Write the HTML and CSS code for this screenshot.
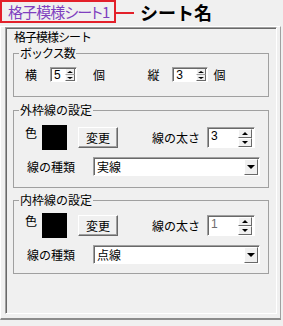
FILE: index.html
```html
<!DOCTYPE html>
<html lang="ja">
  <head>
    <meta charset="UTF-8" />
    <meta name="viewport" content="width=device-width, initial-scale=1.0" />
    <title>格子模様シート</title>
    <link rel="stylesheet" href="styles.css">
  </head>
  <body>
    <div id="header">
      <div id="sheet-tab">格子模様シート1</div>
      <div id="pointer"></div>
      <div id="sheet-label">シート名</div>
    </div>
    <div id="frame">
      <div id="panel">
        <div class="panel-title">格子模様シート</div>

        <fieldset class="group group-count">
          <legend>ボックス数</legend>
          <div class="count-row">
            <span class="count-label">横</span>
            <div class="spin spin-small spin-x">
              <span class="spin-value">5</span>
              <div class="spin-btns">
                <span class="spin-up"><i class="arrow-up"></i></span>
                <span class="spin-down"><i class="arrow-down"></i></span>
              </div>
            </div>
            <span class="unit">個</span>
            <span class="count-label">縦</span>
            <div class="spin spin-small spin-y">
              <span class="spin-value">3</span>
              <div class="spin-btns">
                <span class="spin-up"><i class="arrow-up"></i></span>
                <span class="spin-down"><i class="arrow-down"></i></span>
              </div>
            </div>
            <span class="unit unit-last">個</span>
          </div>
        </fieldset>

        <fieldset class="group group-line">
          <legend>外枠線の設定</legend>
          <div class="color-row">
            <span class="color-label">色</span>
            <div class="swatch"></div>
            <button class="change-btn">変更</button>
            <span class="width-label">線の太さ</span>
            <div class="spin spin-large">
              <span class="spin-value">3</span>
              <div class="spin-btns">
                <span class="spin-up"><i class="arrow-up"></i></span>
                <span class="spin-down"><i class="arrow-down"></i></span>
              </div>
            </div>
          </div>
          <div class="type-row">
            <span class="type-label">線の種類</span>
            <div class="select">
              <span class="select-value">実線</span>
              <span class="select-btn"><i class="arrow-down"></i></span>
            </div>
          </div>
        </fieldset>

        <fieldset class="group group-line group-inner">
          <legend>内枠線の設定</legend>
          <div class="color-row">
            <span class="color-label">色</span>
            <div class="swatch"></div>
            <button class="change-btn">変更</button>
            <span class="width-label">線の太さ</span>
            <div class="spin spin-large">
              <span class="spin-value spin-muted">1</span>
              <div class="spin-btns">
                <span class="spin-up"><i class="arrow-up"></i></span>
                <span class="spin-down"><i class="arrow-down"></i></span>
              </div>
            </div>
          </div>
          <div class="type-row">
            <span class="type-label">線の種類</span>
            <div class="select">
              <span class="select-value">点線</span>
              <span class="select-btn"><i class="arrow-down"></i></span>
            </div>
          </div>
        </fieldset>
      </div>
    </div>
  </body>
</html>
```

FILE: styles.css
```css
body {
  margin: 0;
  width: 283px;
  height: 326px;
  overflow: hidden;
  background-color: #f0f0f0;
  font-family: "Noto Sans CJK JP", sans-serif;
  font-size: 12px;
  line-height: 14px;
  color: #000;
}

/* top: sheet name callout */
#header {
  display: flex;
  align-items: flex-start;
  height: 26px;
}

#sheet-tab {
  box-sizing: border-box;
  width: 116px;
  height: 23px;
  border: 2px solid #e3202a;
  padding-left: 6px;
  font-size: 15px;
  line-height: 19px;
  letter-spacing: -0.9px;
  color: #7f3fbf;
  white-space: nowrap;
  font-feature-settings: "palt";
}

#pointer {
  width: 18px;
  height: 2px;
  margin-top: 12px;
  background-color: #e3202a;
}

#sheet-label {
  margin-left: 6px;
  margin-top: -1px;
  font-size: 18px;
  line-height: 26px;
  font-weight: bold;
}

/* outer frame and sunken panel */
#frame {
  box-sizing: border-box;
  width: 281px;
  height: 294px;
  border-top: 1px solid #fff;
  border-left: 1px solid #fff;
  border-right: 1px solid #a0a0a0;
  border-bottom: 2px solid #8c8c8c;
  padding: 0 3px 0 4px;
}

#panel {
  box-sizing: border-box;
  width: 272px;
  height: 287px;
  border-top: 1px solid #a0a0a0;
  border-left: 1px solid #a0a0a0;
  border-right: 1px solid #fff;
  border-bottom: 1px solid #fff;
  box-shadow: inset 1px 1px 0 #696969;
  padding: 2px 0 0 1px;
}

.panel-title {
  padding-left: 7px;
  height: 14px;
  letter-spacing: -1px;
}

/* group boxes */
.group {
  box-sizing: border-box;
  width: 256px;
  margin: 2px 0 0 6px;
  padding: 0;
  min-width: 0;
  border: 1px solid #a0a0a0;
}

.group legend {
  margin-left: 5px;
  padding: 0 1px;
  line-height: 14px;
}

.group-count legend {
  letter-spacing: -1px;
}

.group-count {
  padding: 7px 0 14px;
}

.group-line {
  margin-top: 6px;
  padding: 8px 0 11px;
}

.group-inner {
  margin-top: 5px;
  padding: 6px 0 9px;
}

/* box count row */
.count-row {
  display: flex;
  align-items: center;
  padding-left: 11px;
}

.count-label {
  width: 27px;
}

.unit {
  width: 59px;
  margin-left: 16px;
}

.unit-last {
  margin-left: 5px;
}

/* numeric up-down */
.spin {
  box-sizing: border-box;
  display: flex;
  background-color: #fff;
  border-top: 1px solid #a0a0a0;
  border-left: 1px solid #a0a0a0;
  border-right: 1px solid #fff;
  border-bottom: 1px solid #fff;
  box-shadow: inset 1px 1px 0 #696969;
}

.spin-small {
  height: 15px;
}

.spin-x {
  width: 29px;
}

.spin-y {
  width: 39px;
}

.spin-large {
  width: 48px;
  height: 21px;
}

.spin-value {
  flex: 1;
  padding: 1px 0 0 3px;
  font-family: "Liberation Sans", sans-serif;
  font-size: 12px;
  line-height: 12px;
}

.spin-large .spin-value {
  line-height: 14px;
}

.spin-muted {
  color: #6d6d6d;
}

.spin-btns {
  display: flex;
  flex-direction: column;
  width: 10px;
  margin: 1px 1px 0 0;
}

.spin-large .spin-btns {
  width: 14px;
  margin: 1px 2px 0 0;
}

.spin-up,
.spin-down {
  flex: 1;
  display: flex;
  align-items: center;
  justify-content: center;
  background-color: #f0f0f0;
  border-top: 1px solid #fff;
  border-left: 1px solid #fff;
  border-right: 1px solid #696969;
  border-bottom: 1px solid #696969;
}

.arrow-up {
  width: 0;
  height: 0;
  border-left: 3px solid transparent;
  border-right: 3px solid transparent;
  border-bottom: 3px solid #000;
}

.arrow-down {
  width: 0;
  height: 0;
  border-left: 3px solid transparent;
  border-right: 3px solid transparent;
  border-top: 3px solid #000;
}

.spin-small .spin-up,
.spin-small .spin-down {
  border-top: 0;
  border-bottom: 0;
}

.spin-small .spin-down {
  border-top: 1px solid #a0a0a0;
  border-bottom: 1px solid #696969;
}

.spin-small .arrow-up {
  border-bottom-width: 2px;
}

.spin-small .arrow-down {
  border-top-width: 2px;
}

/* line settings rows */
.color-row {
  display: flex;
  align-items: center;
  height: 25px;
  padding-left: 11px;
}

.color-label {
  width: 17px;
  align-self: flex-start;
  margin-top: 1px;
}

.swatch {
  width: 25px;
  height: 25px;
  background-color: #000;
}

.change-btn {
  box-sizing: border-box;
  width: 40px;
  height: 21px;
  margin-left: 11px;
  padding: 0;
  font-family: inherit;
  font-size: 12px;
  color: #000;
  background-color: #f0f0f0;
  border-top: 1px solid #fff;
  border-left: 1px solid #fff;
  border-right: 1px solid #696969;
  border-bottom: 1px solid #696969;
  box-shadow: inset -1px -1px 0 #a0a0a0;
}

.width-label {
  width: 55px;
  margin-left: 34px;
}

.type-row {
  display: flex;
  align-items: center;
  margin-top: 7px;
  padding-left: 13px;
}

.type-label {
  width: 66px;
}

.select {
  box-sizing: border-box;
  display: flex;
  width: 167px;
  height: 19px;
  background-color: #fff;
  border-top: 1px solid #a0a0a0;
  border-left: 1px solid #a0a0a0;
  border-right: 1px solid #fff;
  border-bottom: 1px solid #fff;
  box-shadow: inset 1px 1px 0 #696969;
}

.select-value {
  flex: 1;
  padding: 2px 0 0 3px;
}

.select-btn {
  box-sizing: border-box;
  display: flex;
  align-items: center;
  justify-content: center;
  width: 14px;
  margin: 1px 1px 0 0;
  background-color: #f0f0f0;
  border-top: 1px solid #fff;
  border-left: 1px solid #fff;
  border-right: 1px solid #696969;
  border-bottom: 1px solid #696969;
}

.select-btn .arrow-down {
  border-left-width: 4px;
  border-right-width: 4px;
  border-top-width: 4px;
}
```
